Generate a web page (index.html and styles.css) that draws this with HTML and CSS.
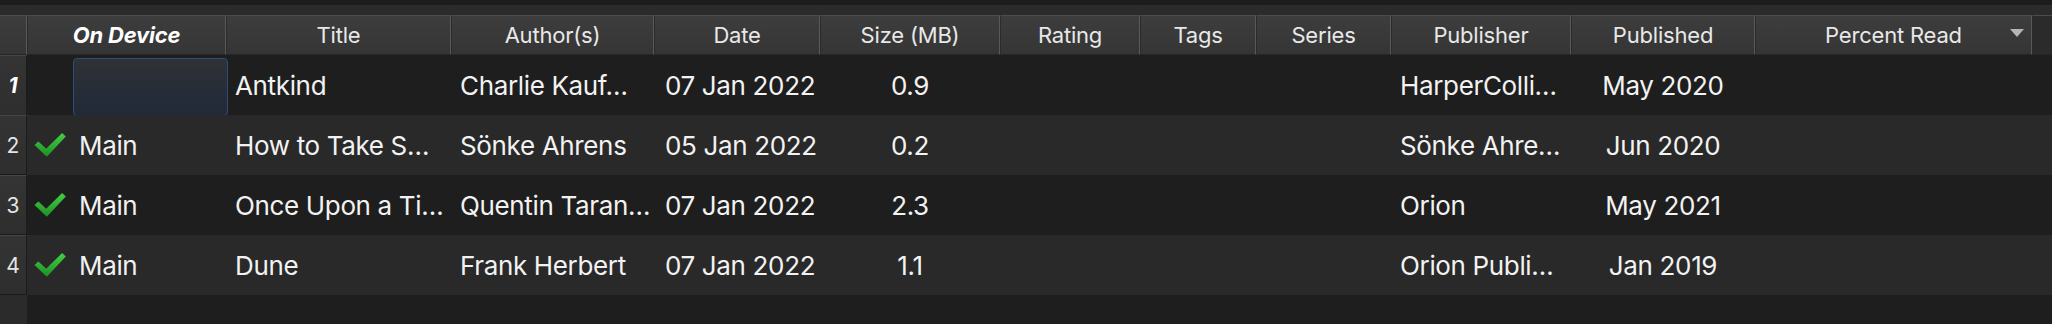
FILE: index.html
```html
<!DOCTYPE html>
<html>
<head>
<meta charset="utf-8">
<link rel="stylesheet" href="styles.css">
</head>
<body>
<div class="top-band"></div>
<div class="tool-band"></div>
<div class="table">
  <div class="cols header">
    <div class="hcell corner"></div>
    <div class="hcell bold">On Device</div>
    <div class="hcell">Title</div>
    <div class="hcell">Author(s)</div>
    <div class="hcell">Date</div>
    <div class="hcell">Size (MB)</div>
    <div class="hcell">Rating</div>
    <div class="hcell">Tags</div>
    <div class="hcell">Series</div>
    <div class="hcell">Publisher</div>
    <div class="hcell">Published</div>
    <div class="hcell sorted">Percent Read<span class="sort-arrow"></span></div>
    <div class="hcell blank"></div>
  </div>

  <div class="cols row odd">
    <div class="rnum current">1</div>
    <div class="cell device"><div class="focus-box"></div></div>
    <div class="cell">Antkind</div>
    <div class="cell">Charlie Kauf…</div>
    <div class="cell date">07 Jan 2022</div>
    <div class="cell center">0.9</div>
    <div class="cell"></div>
    <div class="cell"></div>
    <div class="cell"></div>
    <div class="cell">HarperColli…</div>
    <div class="cell center">May 2020</div>
    <div class="cell"></div>
    <div class="cell"></div>
  </div>

  <div class="cols row even">
    <div class="rnum">2</div>
    <div class="cell device">
      <svg class="check" viewBox="0 0 32 24" width="32" height="24"><defs><linearGradient id="g1" x1="0" y1="0" x2="0" y2="1"><stop offset="0" stop-color="#46cf46"/><stop offset="1" stop-color="#1c8f22"/></linearGradient></defs><polygon points="0.5,12 4.4,8.4 12.2,15.8 28.1,0 31.8,3.4 12.8,23.8" fill="url(#g1)"/></svg>
      <span>Main</span>
    </div>
    <div class="cell">How to Take S…</div>
    <div class="cell">Sönke Ahrens</div>
    <div class="cell date">05 Jan 2022</div>
    <div class="cell center">0.2</div>
    <div class="cell"></div>
    <div class="cell"></div>
    <div class="cell"></div>
    <div class="cell">Sönke Ahre…</div>
    <div class="cell center">Jun 2020</div>
    <div class="cell"></div>
    <div class="cell"></div>
  </div>

  <div class="cols row odd">
    <div class="rnum">3</div>
    <div class="cell device">
      <svg class="check" viewBox="0 0 32 24" width="32" height="24"><defs><linearGradient id="g2" x1="0" y1="0" x2="0" y2="1"><stop offset="0" stop-color="#46cf46"/><stop offset="1" stop-color="#1c8f22"/></linearGradient></defs><polygon points="0.5,12 4.4,8.4 12.2,15.8 28.1,0 31.8,3.4 12.8,23.8" fill="url(#g2)"/></svg>
      <span>Main</span>
    </div>
    <div class="cell">Once Upon a Ti…</div>
    <div class="cell">Quentin Taran…</div>
    <div class="cell date">07 Jan 2022</div>
    <div class="cell center">2.3</div>
    <div class="cell"></div>
    <div class="cell"></div>
    <div class="cell"></div>
    <div class="cell">Orion</div>
    <div class="cell center">May 2021</div>
    <div class="cell"></div>
    <div class="cell"></div>
  </div>

  <div class="cols row even">
    <div class="rnum">4</div>
    <div class="cell device">
      <svg class="check" viewBox="0 0 32 24" width="32" height="24"><defs><linearGradient id="g3" x1="0" y1="0" x2="0" y2="1"><stop offset="0" stop-color="#46cf46"/><stop offset="1" stop-color="#1c8f22"/></linearGradient></defs><polygon points="0.5,12 4.4,8.4 12.2,15.8 28.1,0 31.8,3.4 12.8,23.8" fill="url(#g3)"/></svg>
      <span>Main</span>
    </div>
    <div class="cell">Dune</div>
    <div class="cell">Frank Herbert</div>
    <div class="cell date">07 Jan 2022</div>
    <div class="cell center">1.1</div>
    <div class="cell"></div>
    <div class="cell"></div>
    <div class="cell"></div>
    <div class="cell">Orion Publi…</div>
    <div class="cell center">Jan 2019</div>
    <div class="cell"></div>
    <div class="cell"></div>
  </div>

  <div class="cols filler">
    <div class="vfill"></div>
    <div class="efill"></div>
  </div>
</div>
</body>
</html>
```

FILE: styles.css
```css
html, body {
  margin: 0;
  padding: 0;
}

body {
  width: 2052px;
  height: 324px;
  overflow: hidden;
  background: #1e1e1e;
  font-family: Inter, "Liberation Sans", sans-serif;
  color: #f2f2f2;
  display: flex;
  flex-direction: column;
}

.top-band {
  height: 5px;
  background: #1c1c1c;
}

.tool-band {
  height: 10px;
  background: #2b2b2b;
}

.table {
  flex: 1;
  display: flex;
  flex-direction: column;
}

.cols {
  display: grid;
  grid-template-columns: 27px 199px 225px 203px 166px 180px 140px 116px 135px 180px 184px 277px 1fr;
}

.header {
  height: 40px;
}

.hcell {
  box-sizing: border-box;
  display: flex;
  align-items: center;
  justify-content: center;
  font-size: 22px;
  letter-spacing: -0.2px;
  color: #e8e8e8;
  background: linear-gradient(#3d3d3d, #353535);
  border-top: 1px solid #4c4c4c;
  border-bottom: 1px solid #262626;
  border-left: 1px solid #2b2b2b;
  border-right: 1px solid #595959;
  white-space: nowrap;
}

.hcell.bold {
  font-weight: 700;
  font-style: italic;
  color: #ffffff;
}

.hcell.corner {
  border-left: none;
}

.hcell.blank {
  background: #2b2b2b;
  border-right: none;
}

.hcell.sorted {
  position: relative;
}

.sort-arrow {
  position: absolute;
  right: 7px;
  top: 13px;
  width: 0;
  height: 0;
  border-left: 7px solid transparent;
  border-right: 7px solid transparent;
  border-top: 8px solid #b5b5b5;
}

.row {
  height: 60px;
}

.row.odd {
  background: #1e1e1e;
}

.row.even {
  background: #292929;
}

.rnum {
  box-sizing: border-box;
  display: flex;
  align-items: center;
  justify-content: center;
  font-size: 21px;
  color: #e4e4e4;
  background: linear-gradient(#343434, #2e2e2e);
  border-top: 1px solid #454545;
  border-bottom: 1px solid #1b1b1b;
  border-right: 1px solid #1b1b1b;
}

.rnum.current {
  font-weight: 700;
  font-style: italic;
  color: #ffffff;
}

.cell {
  box-sizing: border-box;
  display: flex;
  align-items: center;
  padding-left: 9px;
  font-size: 26px;
  letter-spacing: -0.35px;
  white-space: nowrap;
  overflow: hidden;
}

.cell.date {
  padding-left: 11px;
}

.cell.center {
  justify-content: center;
  padding-left: 0;
}

.cell.device {
  padding-left: 7px;
  gap: 13px;
  overflow: visible;
}

.check {
  display: block;
  flex: none;
}

.focus-box {
  box-sizing: border-box;
  margin-left: 39px;
  margin-top: 3px;
  width: 155px;
  height: 58px;
  flex: none;
  border: 1.5px solid #2e4c78;
  border-radius: 4px;
  background: linear-gradient(#2f3135, #212a39);
}

.filler {
  flex: 1;
}

.vfill {
  background: #2b2b2b;
}

.efill {
  grid-column: 2 / -1;
  background: #1e1e1e;
}
```
